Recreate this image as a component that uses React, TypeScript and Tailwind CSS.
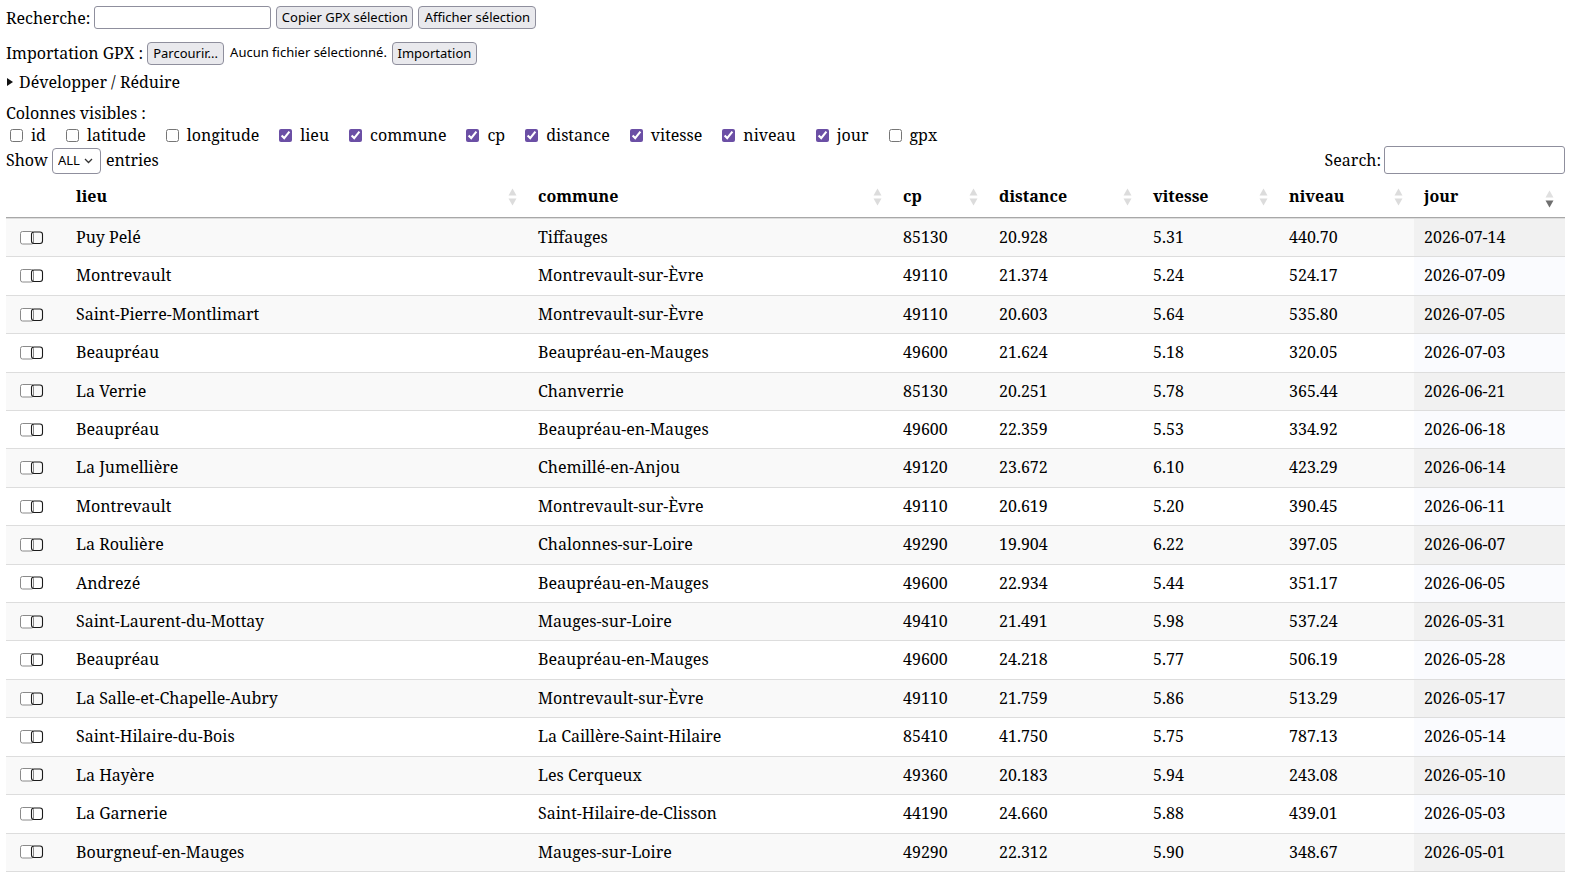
import React from "react";

const rows: string[][] = [
  ["Puy Pelé", "Tiffauges", "85130", "20.928", "5.31", "440.70", "2026-07-14"],
  ["Montrevault", "Montrevault-sur-Èvre", "49110", "21.374", "5.24", "524.17", "2026-07-09"],
  ["Saint-Pierre-Montlimart", "Montrevault-sur-Èvre", "49110", "20.603", "5.64", "535.80", "2026-07-05"],
  ["Beaupréau", "Beaupréau-en-Mauges", "49600", "21.624", "5.18", "320.05", "2026-07-03"],
  ["La Verrie", "Chanverrie", "85130", "20.251", "5.78", "365.44", "2026-06-21"],
  ["Beaupréau", "Beaupréau-en-Mauges", "49600", "22.359", "5.53", "334.92", "2026-06-18"],
  ["La Jumellière", "Chemillé-en-Anjou", "49120", "23.672", "6.10", "423.29", "2026-06-14"],
  ["Montrevault", "Montrevault-sur-Èvre", "49110", "20.619", "5.20", "390.45", "2026-06-11"],
  ["La Roulière", "Chalonnes-sur-Loire", "49290", "19.904", "6.22", "397.05", "2026-06-07"],
  ["Andrezé", "Beaupréau-en-Mauges", "49600", "22.934", "5.44", "351.17", "2026-06-05"],
  ["Saint-Laurent-du-Mottay", "Mauges-sur-Loire", "49410", "21.491", "5.98", "537.24", "2026-05-31"],
  ["Beaupréau", "Beaupréau-en-Mauges", "49600", "24.218", "5.77", "506.19", "2026-05-28"],
  ["La Salle-et-Chapelle-Aubry", "Montrevault-sur-Èvre", "49110", "21.759", "5.86", "513.29", "2026-05-17"],
  ["Saint-Hilaire-du-Bois", "La Caillère-Saint-Hilaire", "85410", "41.750", "5.75", "787.13", "2026-05-14"],
  ["La Hayère", "Les Cerqueux", "49360", "20.183", "5.94", "243.08", "2026-05-10"],
  ["La Garnerie", "Saint-Hilaire-de-Clisson", "44190", "24.660", "5.88", "439.01", "2026-05-03"],
  ["Bourgneuf-en-Mauges", "Mauges-sur-Loire", "49290", "22.312", "5.90", "348.67", "2026-05-01"],
];

const columns: { name: string; checked: boolean }[] = [
  { name: "id", checked: false },
  { name: "latitude", checked: false },
  { name: "longitude", checked: false },
  { name: "lieu", checked: true },
  { name: "commune", checked: true },
  { name: "cp", checked: true },
  { name: "distance", checked: true },
  { name: "vitesse", checked: true },
  { name: "niveau", checked: true },
  { name: "jour", checked: true },
  { name: "gpx", checked: false },
];

const headers = ["lieu", "commune", "cp", "distance", "vitesse", "niveau", "jour"];
const widths = ["w-[462px]", "w-[365px]", "w-[96px]", "w-[154px]", "w-[136px]", "w-[135px]", "w-[151px]"];

function SortIcon({ desc }: { desc?: boolean }) {
  return (
    <svg
      width="9"
      height="19"
      viewBox="0 0 9 19"
      className={
        "absolute right-[11px] top-1/2 " + (desc ? "-translate-y-[40%]" : "-translate-y-1/2")
      }
    >
      <path d="M4.5 1 L8.5 8 L0.5 8 Z" fill={desc ? "#e0e0e0" : "#dcdcdc"} />
      <path d="M4.5 18 L8.5 11 L0.5 11 Z" fill={desc ? "#6f6f6f" : "#dcdcdc"} />
    </svg>
  );
}

function RowSelect() {
  return (
    <svg width="24" height="14" viewBox="0 0 24 14" className="block ml-[4px]">
      <rect x="0.5" y="0.5" width="13" height="12.5" rx="2" fill="white" stroke="#8a8a8a" />
      <rect x="11.5" y="1" width="11" height="11.5" rx="2.5" fill="none" stroke="#1a1a1a" strokeWidth="1.1" />
    </svg>
  );
}

const btn =
  "inline-flex items-center justify-center whitespace-nowrap h-[23px] px-[4px] bg-[#e9e9ed] border border-[#8f8f9d] rounded-[4px] text-[13px] text-black font-['Noto_Sans',sans-serif] leading-none";

export default function App() {
  return (
    <div className="w-[1593px] h-[885px] overflow-hidden bg-white">
      <div className="px-[6px] w-[1571px] text-black text-[16px] font-['Noto_Serif','DejaVu_Serif',serif]">
        <div className="flex items-center h-[23px] mt-[6px]">
          <span>Recherche:</span>
          <input className="ml-[4px] w-[177px] h-[23px] border border-[#8f8f9d] rounded-[3px] bg-white" />
          <button className={btn + " ml-[5px] w-[137px]"}>Copier GPX sélection</button>
          <button className={btn + " ml-[5px] w-[118px]"}>Afficher sélection</button>
        </div>
        <div className="flex items-center h-[22px] mt-[13px]">
          <span>Importation GPX :</span>
          <button className={btn + " ml-[4px] h-[22px] w-[77px]"}>Parcourir...</button>
          <span className="ml-[6px] text-[13px] font-['Noto_Sans',sans-serif]">Aucun fichier sélectionné.</span>
          <button className={btn + " ml-[5px] h-[22px] w-[85px]"}>Importation</button>
        </div>
        <details className="mt-[7px] h-[22px] leading-[22px]">
          <summary className="list-none flex items-center cursor-pointer [&::-webkit-details-marker]:hidden">
            <svg width="6" height="8" viewBox="0 0 6 8" className="ml-[1px] mr-[6px]">
              <path d="M0 0 L6 4 L0 8 Z" fill="#111" />
            </svg>
            Développer / Réduire
          </summary>
        </details>
        <div className="mt-[9px] h-[22px] leading-[22px]">Colonnes visibles :</div>
        <div className="flex items-center h-[22px]">
          {columns.map((c) => (
            <label key={c.name} className="flex items-center mr-[16px]">
              <input
                type="checkbox"
                defaultChecked={c.checked}
                className="w-[13px] h-[13px] ml-[4px] mr-[8px] accent-[#6b4fa5]"
              />
              {c.name}
            </label>
          ))}
        </div>
        <div className="flex items-center justify-between h-[28px]">
          <div className="flex items-center">
            <span>Show</span>
            <div className="relative ml-[4px] w-[49px] h-[26px]">
              <select className="appearance-none w-full h-full border border-[#8f8f9d] rounded-[4px] bg-white pl-[5px] text-[13px] font-['Noto_Sans',sans-serif]">
                <option>ALL</option>
              </select>
              <svg width="9" height="6" viewBox="0 0 9 6" className="absolute right-[8px] top-[11px] pointer-events-none">
                <path d="M1 1 L4.5 4.5 L8 1" fill="none" stroke="#333" strokeWidth="1.3" />
              </svg>
            </div>
            <span className="ml-[5px]">entries</span>
          </div>
          <div className="flex items-center">
            <span>Search:</span>
            <input className="ml-[3px] w-[181px] h-[28px] border border-[#8f8f9d] rounded-[3px] bg-white" />
          </div>
        </div>
        <table className="mt-[2px] w-[1559px] table-fixed border-separate border-spacing-0">
          <thead>
            <tr>
              <th className="w-[60px] border-b border-[#a8a8a8]"></th>
              {headers.map((h, i) => (
                <th
                  key={h}
                  className={
                    widths[i] +
                    " relative text-left font-bold pl-[10px] pr-[18px] py-[10px] leading-[21px] border-b border-[#a8a8a8]"
                  }
                >
                  {h}
                  <SortIcon desc={h === "jour"} />
                </th>
              ))}
            </tr>
          </thead>
          <tbody>
            {rows.map((r, ri) => {
              const odd = ri % 2 === 0;
              return (
                <tr key={ri} className={odd ? "bg-[#f9f9f9]" : "bg-white"}>
                  <td className="px-[10px] py-[8px] border-t border-[#dddddd]">
                    <RowSelect />
                  </td>
                  {r.map((v, ci) => (
                    <td
                      key={ci}
                      className={
                        "px-[10px] py-[8px] leading-[21.4px] whitespace-nowrap border-t border-[#dddddd] " +
                        (ci === 6 ? (odd ? "bg-[#f1f1f1]" : "bg-[#fafbfe]") : "")
                      }
                    >
                      {v}
                    </td>
                  ))}
                </tr>
              );
            })}
            <tr>
              <td colSpan={8} className="h-0 border-t border-[#dddddd] p-0"></td>
            </tr>
          </tbody>
        </table>
      </div>
    </div>
  );
}
